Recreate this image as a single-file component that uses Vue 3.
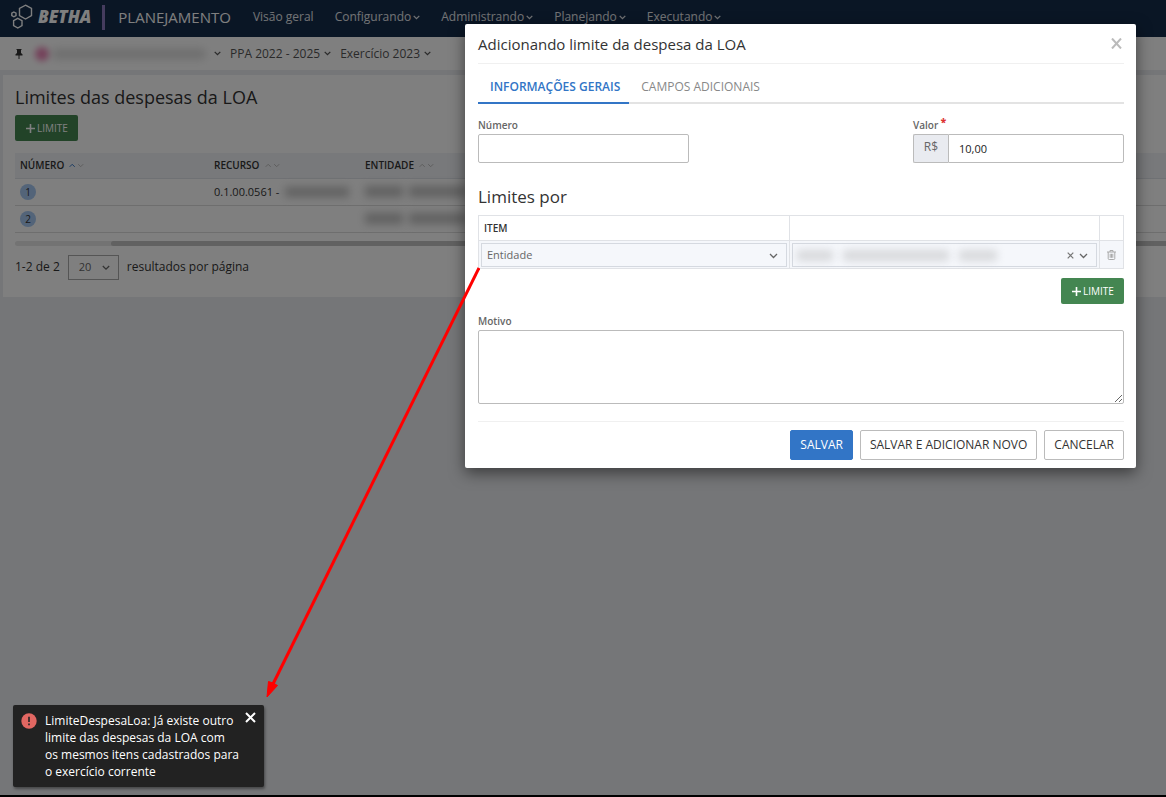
<script setup>
import { ref } from 'vue'

const menus = [
  { label: 'Visão geral', drop: false },
  { label: 'Configurando', drop: true },
  { label: 'Administrando', drop: true },
  { label: 'Planejando', drop: true },
  { label: 'Executando', drop: true }
]
const columns = [
  { label: 'NÚMERO', active: true },
  { label: 'RECURSO', active: false },
  { label: 'ENTIDADE', active: false }
]
const rows = [
  { id: 1, recurso: '0.1.00.0561 -' },
  { id: 2, recurso: '' }
]
const notice = [
  'LimiteDespesaLoa: Já existe outro',
  'limite das despesas da LOA com',
  'os mesmos itens cadastrados para',
  'o exercício corrente'
].join('\n')
const numero = ref('')
const valor = ref('10,00')
const motivo = ref('')
const item = ref('Entidade')
const pageSize = ref('20')
</script>

<template>
  <div class="page">
    <header class="topbar">
      <a href="#" class="brand">
        <svg class="logo" width="24" height="26" viewBox="0 0 24 26" fill="none" stroke="#fff" stroke-width="1.4">
          <path d="M14.500 1.200 20.500 4.500v7.200L14.500 15 8.500 11.700V4.500Z" />
          <path d="m6.800 14.300 4.200 2.400v5L6.800 24l-4.200-2.300v-5Z" />
          <path d="m2.900 8 2.100 1.200v2.400l-2.100 1.200L.8 11.600V9.200Z" />
        </svg>
        <strong>BETHA</strong>
      </a>
      <span class="divider"></span>
      <span class="product">PLANEJAMENTO</span>
      <nav class="menu">
        <a v-for="m in menus" :key="m.label" href="#">{{ m.label }}<svg v-if="m.drop" class="chev" width="7" height="5" viewBox="0 0 7 5"><path d="m.7.9 2.800 2.800L6.300.9" /></svg></a>
      </nav>
    </header>

    <div class="context">
      <svg class="pin" width="8" height="10" viewBox="0 0 8 10"><path d="M1.500 0h5v1H6v3l1.500 1.300V6.500h-3V10h-1V6.500h-3V5.300L2 4V1h-.5Z" /></svg>
      <button type="button" class="entity" aria-label="Entidade">
        <span class="avatar"></span>
        <span class="smudge name"></span>
        <svg class="chev" width="7" height="5" viewBox="0 0 7 5"><path d="m.7.9 2.800 2.800L6.300.9" /></svg>
      </button>
      <button type="button">PPA 2022 - 2025<svg class="chev" width="7" height="5" viewBox="0 0 7 5"><path d="m.7.9 2.800 2.800L6.300.9" /></svg></button>
      <button type="button">Exercício 2023<svg class="chev" width="7" height="5" viewBox="0 0 7 5"><path d="m.7.9 2.800 2.800L6.300.9" /></svg></button>
    </div>

    <main class="card">
      <h1>Limites das despesas da LOA</h1>
      <button type="button" class="add"><svg width="9" height="9" viewBox="0 0 9 9"><path d="M4.500 0v9M0 4.500h9" /></svg>LIMITE</button>
      <table class="list">
        <thead>
          <tr>
            <th v-for="c in columns" :key="c.label" scope="col">{{ c.label }}<svg class="sort" :class="{ active: c.active }" width="15" height="5" viewBox="0 0 15 5"><path class="up" d="m.7 3.800 2.500-2.500 2.500 2.500" /><path d="m9.200 1.200 2.500 2.500 2.500-2.500" /></svg></th>
          </tr>
        </thead>
        <tbody>
          <tr v-for="r in rows" :key="r.id">
            <td><span class="badge">{{ r.id }}</span></td>
            <td><span class="resource">{{ r.recurso }}<i v-if="r.recurso" class="smudge res"></i></span></td>
            <td><span class="resource"><i class="smudge word"></i><i class="smudge word wide"></i></span></td>
          </tr>
        </tbody>
      </table>
      <div class="scroll"><span></span></div>
      <div class="pager">
        <span>1-2 de 2</span>
        <span class="select small">
          <select id="size" v-model="pageSize"><option>20</option></select>
          <svg class="chev" width="8" height="6" viewBox="0 0 8 6"><path d="m.8 1 3.200 3.200L7.200 1" /></svg>
        </span>
        <label for="size">resultados por página</label>
      </div>
    </main>

    <div class="backdrop">
      <section class="modal" role="dialog" aria-labelledby="modal-title">
        <header class="modal-head">
          <h2 id="modal-title">Adicionando limite da despesa da LOA</h2>
          <button type="button" aria-label="Fechar"><svg width="11" height="11" viewBox="0 0 11 11"><path d="m1 .5 9 10M10 .5l-9 10" /></svg></button>
        </header>
        <div class="tabs" role="tablist">
          <button type="button" role="tab" aria-selected="true" class="on">INFORMAÇÕES GERAIS</button>
          <button type="button" role="tab" aria-selected="false">CAMPOS ADICIONAIS</button>
        </div>
        <form @submit.prevent>
          <div class="fields">
            <div class="field">
              <label for="numero">Número</label>
              <input id="numero" v-model="numero" type="text">
            </div>
            <div class="field">
              <label for="valor">Valor <b>*</b></label>
              <div class="money"><span>R$</span><input id="valor" v-model="valor" type="text"></div>
            </div>
          </div>
          <h3>Limites por</h3>
          <table class="items">
            <colgroup><col><col><col class="narrow"></colgroup>
            <thead><tr><th scope="col">ITEM</th><th></th><th></th></tr></thead>
            <tbody>
              <tr>
                <td>
                  <span class="select">
                    <select v-model="item" aria-label="Item"><option>Entidade</option></select>
                    <svg class="chev" width="9" height="6" viewBox="0 0 9 6"><path d="m1 1 3.500 3.500L8 1" /></svg>
                  </span>
                </td>
                <td>
                  <span class="select">
                    <select aria-label="Valor do item"><option></option></select>
                    <span class="value"><i class="smudge a"></i><i class="smudge b"></i><i class="smudge c"></i></span>
                    <button type="button" class="clear" aria-label="Limpar"><svg width="7" height="7" viewBox="0 0 7 7"><path d="m.7.700 5.600 5.600M6.300.7.7 6.300" /></svg></button>
                    <svg class="chev" width="9" height="6" viewBox="0 0 9 6"><path d="m1 1 3.500 3.500L8 1" /></svg>
                  </span>
                </td>
                <td class="trash">
                  <button type="button" aria-label="Excluir"><svg width="9" height="10" viewBox="0 0 9 10"><path d="M0 2h9M3 2V.5h3V2M1.200 2v6.500q0 1 1 1h4.600q1 0 1-1V2M3.200 3.800v4M4.500 3.800v4M5.800 3.800v4" /></svg></button>
                </td>
              </tr>
            </tbody>
          </table>
          <div class="right"><button type="button" class="add"><svg width="9" height="9" viewBox="0 0 9 9"><path d="M4.500 0v9M0 4.500h9" /></svg>LIMITE</button></div>
          <div class="motivo">
            <label for="motivo">Motivo</label>
            <textarea id="motivo" v-model="motivo"></textarea>
          </div>
          <footer class="actions">
            <button type="submit" class="primary">SALVAR</button>
            <button type="button">SALVAR E ADICIONAR NOVO</button>
            <button type="button">CANCELAR</button>
          </footer>
        </form>
      </section>
    </div>

    <svg class="arrow" width="214" height="432" viewBox="0 0 214 432">
      <path class="line" d="M213 2 7 418" />
      <path class="head" d="M1 431 2.500 415.500l4.500 1.500 4.500 2.500Z" />
    </svg>

    <aside class="toast" role="alert">
      <svg class="warn" width="16" height="16" viewBox="0 0 16 16"><circle cx="8" cy="8" r="7.700" fill="#e26762" /><path d="M8 3.800v5.300M8 10.500v1.700" stroke="#222" stroke-width="1.600" /></svg>
      <p>{{ notice }}</p>
      <button type="button" aria-label="Fechar aviso"><svg width="11" height="11" viewBox="0 0 11 11"><path d="m1 1 9 9M10 1l-9 9" /></svg></button>
    </aside>
  </div>
</template>

<style>
body { margin: 0; }
</style>

<style scoped>
.page {
  position: relative;
  box-sizing: border-box;
  min-height: 100vh;
  overflow: hidden;
  background: #eaecf0;
  border-bottom: 2px solid #000;
  color: #333;
  font: 12px/18px "Open Sans", "Noto Sans", sans-serif;
}
.page *, .page *::before { box-sizing: border-box; }
button, input, select, textarea { font: inherit; color: inherit; margin: 0; }
button { padding: 0; border: 0; background: none; }
a { color: inherit; text-decoration: none; }
h1, h2, h3, p { margin: 0; font-weight: 400; }
svg { display: block; flex: none; }
.chev { fill: none; stroke: currentColor; stroke-width: 1.3; }
.smudge { display: block; background: #999; filter: blur(4px); opacity: .6; }

.topbar { display: flex; align-items: center; height: 37px; padding: 0 11px 3px; background: #142c4b; color: #fff; }
.brand { display: flex; align-items: center; gap: 3px; }
.brand strong { font: italic 800 17px/20px "Open Sans", sans-serif; }
.divider { width: 3px; height: 25px; margin: 0 13px 0 11px; background: #8a78bd; }
.product { font-size: 15px; }
.menu { display: flex; gap: 21px; margin-left: 22px; color: #e4e6ea; white-space: nowrap; }
.menu a { display: flex; align-items: center; gap: 2px; }

.context { display: flex; align-items: center; gap: 9px; height: 33px; padding-left: 15px; background: #fff; color: #555; }
.context button { display: flex; align-items: center; gap: 4px; white-space: nowrap; }
.pin { fill: #333; }
.entity .avatar { width: 14px; height: 14px; margin-left: 3px; border-radius: 50%; background: #e982b4; filter: blur(3px); }
.entity .name { width: 152px; height: 10px; margin-right: 5px; opacity: .35; }

.card { margin: 5px 0 0 3px; padding: 10px 0 17px 12px; background: #fff; }
h1 { font-size: 18px; line-height: 25px; }
.add { display: flex; align-items: center; gap: 2px; width: 63px; height: 26px; padding-left: 11px; border-radius: 2px; background: #448651; color: #fff; font-size: 10px; }
.add svg { fill: none; stroke: #fff; stroke-width: 1.6; }
.card .add { margin: 5px 0 12px; }
.list { width: 100%; border-collapse: collapse; table-layout: fixed; font-size: 11px; }
.list th { height: 25px; padding: 0 5px; border-bottom: 1px solid #dfe2e8; background: #f0f2f6; text-align: left; font-size: 10px; font-weight: 600; white-space: nowrap; }
.list th:nth-child(1) { width: 194px; }
.list th:nth-child(2) { width: 151px; }
.list td { height: 27px; padding: 0 5px; border-bottom: 1px solid #dcdcdc; }
.sort { display: inline-block; margin-left: 5px; vertical-align: 1px; fill: none; stroke: #bbb; }
.sort.active .up { stroke: #3275c6; }
.badge { display: block; width: 16px; height: 16px; border-radius: 50%; background: #a6c8f2; text-align: center; line-height: 16px; font-size: 10px; }
.resource { display: flex; align-items: center; height: 18px; gap: 6px; white-space: nowrap; overflow: visible; }
.res { width: 64px; height: 10px; flex: none; }
.word { width: 38px; height: 11px; }
.word.wide { width: 58px; }
.scroll { height: 5px; margin-top: 8px; border-radius: 3px; background: #e6e6e6; }
.scroll span { display: block; height: 5px; margin-left: 96px; border-radius: 3px 0 0 3px; background: #c2c2c2; }
.pager { display: flex; align-items: center; gap: 8px; margin-top: 9px; }
.select { position: relative; display: block; }
.select select { display: block; width: 100%; height: 24px; padding: 0 5px; border: 1px solid #d5d9e0; border-radius: 0; background: #f5f7fb; color: #666; appearance: none; font-size: 11px; }
.select .chev { position: absolute; right: 9px; top: 10px; color: #666; pointer-events: none; }
.small { width: 51px; }
.select.small select { height: 25px; padding: 0 10px; border-color: #aaa; background: #fff; }

.backdrop { position: absolute; inset: 0; display: flex; justify-content: flex-end; align-items: flex-start; padding: 24px 30px; background: rgba(0, 0, 0, .5); }
.modal { width: 671px; max-width: 100%; padding: 0 12px 8px 13px; border-radius: 2px; background: #fff; box-shadow: 0 5px 15px rgba(0, 0, 0, .5); }
.modal-head { display: flex; align-items: center; justify-content: space-between; height: 40px; padding-right: 2px; border-bottom: 1px solid #f0f0f0; }
h2 { font-size: 15px; line-height: 20px; }
.modal-head svg { fill: none; stroke: #bbb; stroke-width: 2; }
.tabs { display: flex; height: 40px; border-bottom: 2px solid #e3e3e3; color: #888; }
.tabs button { height: 40px; padding: 8px 9px 0 12px; border-bottom: 2px solid transparent; }
.tabs .on { border-color: #3275c6; color: #3275c6; font-weight: 600; }
.fields { display: flex; justify-content: space-between; margin-top: 13px; }
.field { width: 211px; }
.field label, .motivo label { display: block; height: 17px; line-height: 17px; font-size: 10px; font-weight: 600; color: #666; }
.field b { color: #d33; line-height: 8px; vertical-align: 3px; }
input { display: block; width: 100%; height: 29px; padding: 0 10px; border: 1px solid #bbb; border-radius: 2px; background: #fff; color: #222; font-size: 11px; }
.money { display: flex; }
.money span { flex: none; width: 35px; height: 29px; border: 1px solid #bbb; border-right: 0; border-radius: 2px 0 0 2px; background: #e9ebf0; color: #666; text-align: center; line-height: 24px; }
.money input { flex: 1; min-width: 0; border-radius: 0 2px 2px 0; }
h3 { margin-top: 21px; font-size: 17px; line-height: 26px; }
.items { width: 100%; margin-top: 5px; border-collapse: collapse; table-layout: fixed; }
.items th, .items td { border: 1px solid #e0e2e6; }
.items th { height: 25px; padding: 0 5px 1px; text-align: left; font-size: 10px; font-weight: 600; }
.items td { height: 28px; padding: 1px 2px; background: #f5f7fb; }
.narrow { width: 24px; }
.value { position: absolute; left: 5px; top: 7px; display: flex; gap: 10px; pointer-events: none; }
.value i { height: 11px; opacity: .32; }
.a { width: 36px; }
.b { width: 106px; }
.c { width: 38px; }
.clear { position: absolute; right: 23px; top: 9px; }
.clear svg { fill: none; stroke: #777; stroke-width: 1.2; }
.trash button { display: block; margin: 0 auto; }
.trash svg { fill: none; stroke: #aaa; }
.right { display: flex; justify-content: flex-end; margin-top: 9px; }
.motivo { margin-top: 9px; }
textarea { display: block; width: 100%; height: 74px; border: 1px solid #bbb; border-radius: 2px; background: #fff; resize: vertical; }
.actions { display: flex; justify-content: flex-end; gap: 7px; margin-top: 17px; padding-top: 8px; border-top: 1px solid #f0f0f0; }
.actions button { height: 30px; padding: 0 9px 1px; border: 1px solid #bbb; border-radius: 2px; background: #fff; white-space: nowrap; }
.actions .primary { border-color: #3275c6; background: #3275c6; color: #fff; font-weight: 500; }

.arrow { position: absolute; left: 266px; top: 266px; pointer-events: none; }
.line { fill: none; stroke: #f00; stroke-width: 3; }
.head { fill: #f00; stroke: #f00; stroke-width: 1; }
.toast { position: absolute; left: 13px; bottom: 8px; display: flex; align-items: flex-start; width: 251px; padding: 7px 8px; border-radius: 2px; background: #222; color: #fff; box-shadow: 1px 2px 3px rgba(0, 0, 0, .4); }
.toast p { margin-left: 8px; line-height: 17px; font-weight: 500; white-space: pre; }
.warn { margin-top: 1px; }
.toast button { margin-left: auto; }
.toast button svg { fill: none; stroke: #fff; stroke-width: 2; }
</style>
